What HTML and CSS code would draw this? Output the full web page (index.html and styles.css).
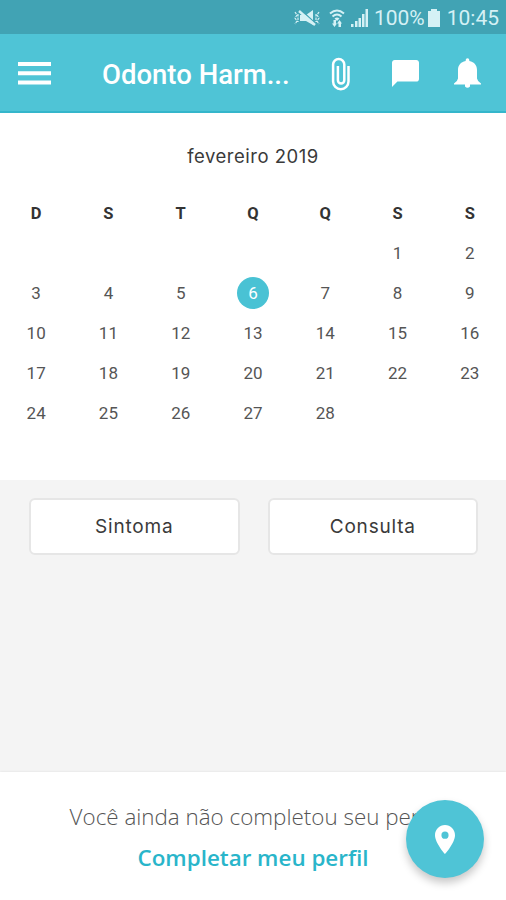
FILE: index.html
```
<!DOCTYPE html>
<html lang="pt-BR">

<head>
    <meta charset="UTF-8" />
    <meta name="viewport" content="width=device-width, initial-scale=1.0" />
    <title>Odonto Harmony</title>
    <link rel="stylesheet" href="styles.css">
</head>

<body>
    <div class="status-bar">
        <svg class="icon-mute" width="26" height="18" viewBox="0 0 26 18">
            <path d="M6 6h6l7-5v15l-7-4H6z" fill="currentColor" />
            <path d="M7 1l14 13" stroke="#41a3b4" stroke-width="1.500" />
            <path d="M5 2l16 14" stroke="currentColor" stroke-width="2.400" />
            <path d="M1 3l2 3-2 3 2 3-2 3M4 5v8M25 3l-2 3 2 3-2 3 2 3M22 5v8" fill="none" stroke="currentColor" stroke-width="1.200" stroke-dasharray="2.500 1" />
        </svg>
        <svg class="icon-wifi" width="16" height="18" viewBox="0 0 16 18">
            <path d="M1 4.500q7-6 14 0M3.500 7.500q4.500-4 9 0" fill="none" stroke="currentColor" stroke-width="2" />
            <path d="M5.500 9.500q2.500-2 5 0L8 12zM3 14.500h1.500V11H7v3.500h1L5.500 18zM8 14.500l2.500-3.500 2.500 3.500h-1V18H9.500v-3.500z" fill="currentColor" />
        </svg>
        <svg class="icon-signal" width="18" height="18" viewBox="0 0 18 18">
            <path d="M0 15h2.500v3H0zM4 12h2.500v6H4zM7.500 9H10v9H7.500zM11 5h2.500v13H11zM14.500 0H17v18h-2.500z" fill="currentColor" />
        </svg>
        <span class="battery-text">100%</span>
        <svg class="icon-battery" width="12" height="18" viewBox="0 0 12 18">
            <path d="M3 0h6v2h3v16H0V2h3z" fill="currentColor" />
        </svg>
        <span class="clock">10:45</span>
    </div>

    <header class="toolbar">
        <svg class="menu" width="34" height="24" viewBox="0 0 34 24">
            <path d="M0 3h33M0 12.200h33M0 21.500h33" stroke="currentColor" stroke-width="4" />
        </svg>
        <h1>Odonto Harm...</h1>
        <svg class="clip" width="20" height="34" viewBox="0 0 20 34">
            <path d="M17.500 9v15.500a7.700 7.700 0 0 1-15.400 0V7.500a5.600 5.600 0 0 1 11.200 0v15.800a3.200 3.200 0 0 1-6.400 0V9" fill="none" stroke="currentColor" stroke-width="2.500" />
        </svg>
        <svg class="chat" width="27" height="27" viewBox="2 2 20 20">
            <path d="M20 2H4c-1.100 0-2 .9-2 2v18l4-4h14c1.100 0 2-.9 2-2V4c0-1.100-.9-2-2-2z" fill="currentColor" />
        </svg>
        <svg class="bell" width="27" height="31" viewBox="0 0 27 31">
            <path d="M11.700 3V2a1.800 1.800 0 0 1 3.600 0v1C20.500 4 23 7.500 23 12v8.500q.5 3 4 5v1H0v-1q3.500-2 4-5V12C4 7.500 6.500 4 11.700 3zM11 26h5v2.500q-2.500 2.500-5 0z" fill="currentColor" />
        </svg>
    </header>

    <section class="calendar">
        <h2>fevereiro 2019</h2>
        <div class="days" id="days">
            <b>D</b><b>S</b><b>T</b><b>Q</b><b>Q</b><b>S</b><b>S</b>
        </div>
    </section>

    <main class="actions">
        <button>Sintoma</button>
        <button>Consulta</button>
    </main>

    <footer class="profile">
        <p>Você ainda não completou seu perfil</p>
        <a>Completar meu perfil</a>
        <div class="fab">
            <svg width="20" height="29" viewBox="5 2 14 20" preserveAspectRatio="none">
                <path d="M12 2C8.130 2 5 5.130 5 9c0 5.250 7 13 7 13s7-7.750 7-13c0-3.870-3.130-7-7-7zm0 9.500a2.500 2.500 0 0 1 0-5 2.500 2.500 0 0 1 0 5z" fill="currentColor" />
            </svg>
        </div>
    </footer>

    <script>
        const days = document.querySelector("#days");
        const today = 6;

        for (let i = 1; i <= 28; i++) {
            const day = document.createElement("span");
            day.textContent = i;
            //the month starts on a friday
            if (i == 1) day.classList.add("first");
            if (i == today) day.classList.add("today");
            days.appendChild(day);
        }
    </script>
</body>

</html>
```
FILE: styles.css
```
* {
    box-sizing: border-box;
}

body {
    margin: 0;
    height: 900px;
    display: flex;
    flex-direction: column;
    overflow: hidden;
    background-color: #f4f4f4;
    font-family: Roboto, sans-serif;
}

.status-bar {
    height: 34px;
    padding: 2px 7px 0 0;
    display: flex;
    justify-content: flex-end;
    align-items: center;
    background-color: #41a3b4;
    color: #d5f1f5;
    font-size: 21px;
}

.icon-wifi {
    margin-left: 9px;
}

.icon-signal {
    margin-left: 6px;
}

.battery-text {
    margin-left: 5px;
}

.icon-battery {
    margin: 0 7px 0 3px;
}

.toolbar {
    height: 79px;
    padding: 0 25px 0 18px;
    display: flex;
    align-items: center;
    background-color: #4fc4d6;
    border-bottom: 2px solid #35b6cb;
    color: white;
}

.menu {
    margin-top: 1px;
}

.toolbar h1 {
    width: 188px;
    margin: 3px 41px 0 50px;
    font-size: 27.5px;
    font-weight: 500;
    white-space: nowrap;
}

.clip,
.bell {
    margin-top: 2px;
}

.chat {
    margin: 2px 0 0 41px;
}

.bell {
    margin-left: 35px;
}

.calendar {
    height: 367px;
    padding-top: 30px;
    background-color: white;
    color: #555;
}

.calendar h2 {
    margin: 0 0 23px;
    text-align: center;
    font-family: Inter, sans-serif;
    font-size: 18.5px;
    font-weight: 400;
    line-height: 27px;
    letter-spacing: 0.5px;
    color: #3a3a3a;
}

.days {
    display: grid;
    grid-template-columns: repeat(7, 1fr);
    grid-auto-rows: 40px;
    place-items: center;
    font-size: 17px;
}

.days b {
    font-size: 16.5px;
    color: #333;
}

.days .first {
    grid-column: 6;
}

.days .today {
    width: 32px;
    height: 32px;
    line-height: 32px;
    border-radius: 50%;
    text-align: center;
    background-color: #49c2d4;
    color: white;
}

.actions {
    flex: 1;
    padding: 18px 28px 0 29px;
    display: flex;
    align-items: flex-start;
    gap: 28px;
}

.actions button {
    flex: 1;
    height: 57px;
    padding: 0;
    border: 2px solid #e6e6e6;
    border-radius: 6px;
    background-color: white;
    color: #3a3a3a;
    font-family: Inter, sans-serif;
    font-size: 19px;
    font-weight: 400;
    letter-spacing: 0.8px;
}

.profile {
    position: relative;
    height: 128px;
    padding-top: 30px;
    display: flex;
    flex-direction: column;
    align-items: center;
    background-color: white;
    box-shadow: 0 0 2px #ddd;
    font-family: "Open Sans", sans-serif;
    font-size: 22.4px;
    line-height: 30px;
    white-space: nowrap;
}

.profile p {
    margin: 0 0 11px;
    font-weight: 300;
    color: #555;
}

.profile a {
    font-weight: 600;
    color: #29b5ca;
}

.fab {
    position: absolute;
    right: 22px;
    bottom: 22px;
    width: 78px;
    height: 78px;
    display: flex;
    justify-content: center;
    align-items: center;
    border-radius: 50%;
    background-color: #4fc4d6;
    color: white;
    box-shadow: 0 5px 9px rgba(0, 0, 0, 0.22);
}
```
